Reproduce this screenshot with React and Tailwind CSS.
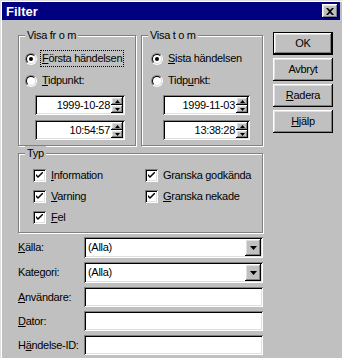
import React from "react";

const raised =
  "shadow-[inset_-1px_-1px_0_#000,inset_1px_1px_0_#fff,inset_-2px_-2px_0_#808080,inset_2px_2px_0_#dfdfdf]";
const sunken =
  "shadow-[inset_1px_1px_0_#808080,inset_-1px_-1px_0_#fff,inset_2px_2px_0_#000,inset_-2px_-2px_0_#dfdfdf]";

function U({ children }) {
  return <span className="underline underline-offset-[1px]">{children}</span>;
}

function Group({ label, className, children }) {
  return (
    <div
      className={
        "relative border border-[#808080] shadow-[inset_1px_1px_0_#fff,1px_1px_0_#fff] " +
        className
      }
    >
      <span className="absolute -top-[8px] left-[6px] bg-[#c0c0c0] px-[2px] leading-[14px]">
        {label}
      </span>
      {children}
    </div>
  );
}

function Radio({ checked, children, focus }) {
  return (
    <div className="flex items-center h-[17px]">
      <div className="w-[12px] h-[12px] rounded-full border border-t-[#808080] border-l-[#808080] border-b-white border-r-white">
        <div className="w-full h-full rounded-full border border-t-black border-l-black border-b-[#dfdfdf] border-r-[#dfdfdf] bg-white flex items-center justify-center">
          {checked && <div className="w-[4px] h-[4px] rounded-full bg-black" />}
        </div>
      </div>
      <span
        className={
          "ml-[3px] px-[1px] leading-[15px] border " +
          (focus ? "border-dotted border-black" : "border-transparent")
        }
      >
        {children}
      </span>
    </div>
  );
}

function Check({ children }) {
  return (
    <div className="flex items-center h-[16px]">
      <div className={"w-[13px] h-[13px] bg-white flex items-center justify-center " + sunken}>
        <svg width="7" height="7" viewBox="0 0 7 7">
          <path d="M0 2 L0 4 L2 6 L7 1 L7 -1 L2 4 Z" fill="#000" />
        </svg>
      </div>
      <span className="ml-[5px]">{children}</span>
    </div>
  );
}

function Arrow({ up }) {
  return (
    <svg width="5" height="3" viewBox="0 0 5 3">
      <path d={up ? "M2.5 0 L5 3 L0 3 Z" : "M0 0 L5 0 L2.5 3 Z"} fill="#000" />
    </svg>
  );
}

function Spin({ value, width }) {
  return (
    <div className={"flex h-[20px] p-[2px] bg-white " + sunken} style={{ width }}>
      <div className="flex-1 flex items-center justify-end pr-[1px]">{value}</div>
      <div className="flex flex-col w-[12px]">
        <div className={"flex-1 bg-[#c0c0c0] flex items-center justify-center " + raised}>
          <Arrow up />
        </div>
        <div className={"flex-1 bg-[#c0c0c0] flex items-center justify-center " + raised}>
          <Arrow />
        </div>
      </div>
    </div>
  );
}

function Combo({ value }) {
  return (
    <div className={"flex w-[179px] h-[21px] p-[2px] bg-white " + sunken}>
      <div className="flex-1 flex items-center pl-[2px]">{value}</div>
      <div className={"w-[16px] bg-[#c0c0c0] flex items-center justify-center " + raised}>
        <svg width="7" height="4" viewBox="0 0 7 4">
          <path d="M0 0 L7 0 L3.5 4 Z" fill="#000" />
        </svg>
      </div>
    </div>
  );
}

function Edit() {
  return <div className={"w-[179px] h-[20px] bg-white " + sunken} />;
}

function Btn({ children, def }) {
  return (
    <div
      className={
        "w-[60px] h-[23px] " + (def ? "border border-black" : "")
      }
    >
      <div className={"w-full h-full flex items-center justify-center " + raised}>
        {children}
      </div>
    </div>
  );
}

function Row({ label, children }) {
  return (
    <div className="flex items-center">
      <div className="w-[66px]">{label}</div>
      {children}
    </div>
  );
}

export default function App() {
  return (
    <div className="w-[342px] h-[358px] overflow-hidden bg-[#c0c0c0] px-[2px] pt-[2px] font-['Liberation_Sans',Arial,sans-serif] text-[11px] leading-[13px] tracking-[-0.3px] text-black shadow-[inset_1px_1px_0_#dfdfdf,inset_2px_2px_0_#fff]">
      <div className="h-[18px] bg-[#000080] flex items-center justify-between pl-[4px] pr-[2px]">
        <span className="text-white font-bold text-[13px] tracking-normal">Filter</span>
        <div className={"w-[16px] h-[14px] bg-[#c0c0c0] flex items-center justify-center " + raised}>
          <svg width="8" height="7" viewBox="0 0 8 7">
            <path d="M0 0 H2 L4 2 L6 0 H8 L5 3.5 L8 7 H6 L4 5 L2 7 H0 L3 3.5 Z" fill="#000" />
          </svg>
        </div>
      </div>
      <div className="flex items-start pl-[16px]">
        <div className="w-[245px] pt-[15px] flex flex-col">
          <div className="flex gap-[5px]">
            <Group label="Visa fr o m" className="w-[118px] h-[111px] pt-[14px] pl-[6px] flex flex-col">
              <Radio checked focus>
                <U>F</U>örsta händelsen
              </Radio>
              <div className="mt-[5px]">
                <Radio>
                  <U>T</U>idpunkt:
                </Radio>
              </div>
              <div className="mt-[6px] ml-[10px] flex flex-col gap-[5px]">
                <Spin value="1999-10-28" width={90} />
                <Spin value="10:54:57" width={90} />
              </div>
            </Group>
            <Group label="Visa t o m" className="w-[122px] h-[111px] pt-[14px] pl-[9px] flex flex-col">
              <Radio checked>
                <U>S</U>ista händelsen
              </Radio>
              <div className="mt-[5px]">
                <Radio>
                  Tidp<U>u</U>nkt:
                </Radio>
              </div>
              <div className="mt-[6px] ml-[12px] flex flex-col gap-[5px]">
                <Spin value="1999-11-03" width={87} />
                <Spin value="13:38:28" width={87} />
              </div>
            </Group>
          </div>
          <Group label="Typ" className="mt-[7px] w-[245px] h-[80px] pt-[13px] pl-[14px]">
            <div className="grid grid-cols-[112px_1fr] gap-y-[5px]">
              <Check>
                <U>I</U>nformation
              </Check>
              <Check>
                Granska <U>g</U>odkända
              </Check>
              <Check>
                <U>V</U>arning
              </Check>
              <Check>
                <U>G</U>ranska nekade
              </Check>
              <Check>
                <U>F</U>el
              </Check>
            </div>
          </Group>
          <div className="mt-[4px] flex flex-col gap-[4px]">
            <Row label={<><U>K</U>älla:</>}>
              <Combo value="(Alla)" />
            </Row>
            <Row label={<>Kate<U>g</U>ori:</>}>
              <Combo value="(Alla)" />
            </Row>
            <Row label={<><U>A</U>nvändare:</>}>
              <Edit />
            </Row>
            <Row label={<><U>D</U>ator:</>}>
              <Edit />
            </Row>
            <Row label={<>H<U>ä</U>ndelse-ID:</>}>
              <Edit />
            </Row>
          </div>
        </div>
        <div className="ml-[10px] pt-[12px] flex flex-col gap-[3px]">
          <Btn def>OK</Btn>
          <Btn>Avbryt</Btn>
          <Btn>
            <U>R</U>adera
          </Btn>
          <Btn>
            <U>H</U>jälp
          </Btn>
        </div>
      </div>
    </div>
  );
}
